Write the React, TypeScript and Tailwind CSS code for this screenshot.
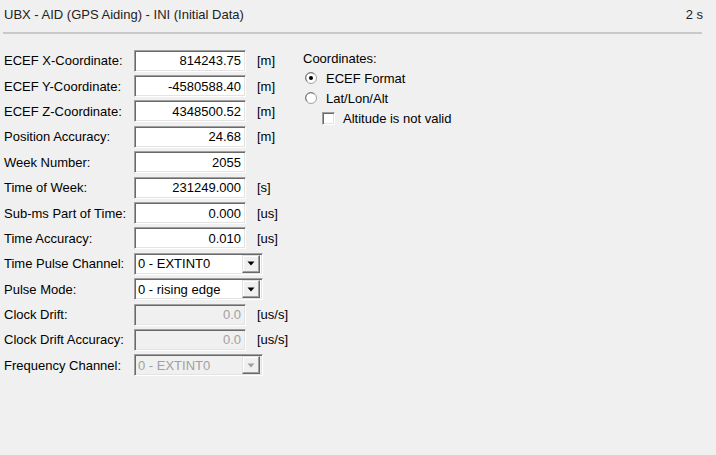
const rows: { label: string; kind: 'edit' | 'combo'; value: string; unit?: string; disabled?: boolean }[] = [
  { label: 'ECEF X-Coordinate:', kind: 'edit', value: '814243.75', unit: '[m]' },
  { label: 'ECEF Y-Coordinate:', kind: 'edit', value: '-4580588.40', unit: '[m]' },
  { label: 'ECEF Z-Coordinate:', kind: 'edit', value: '4348500.52', unit: '[m]' },
  { label: 'Position Accuracy:', kind: 'edit', value: '24.68', unit: '[m]' },
  { label: 'Week Number:', kind: 'edit', value: '2055' },
  { label: 'Time of Week:', kind: 'edit', value: '231249.000', unit: '[s]' },
  { label: 'Sub-ms Part of Time:', kind: 'edit', value: '0.000', unit: '[us]' },
  { label: 'Time Accuracy:', kind: 'edit', value: '0.010', unit: '[us]' },
  { label: 'Time Pulse Channel:', kind: 'combo', value: '0 - EXTINT0' },
  { label: 'Pulse Mode:', kind: 'combo', value: '0 - rising edge' },
  { label: 'Clock Drift:', kind: 'edit', value: '0.0', unit: '[us/s]', disabled: true },
  { label: 'Clock Drift Accuracy:', kind: 'edit', value: '0.0', unit: '[us/s]', disabled: true },
  { label: 'Frequency Channel:', kind: 'combo', value: '0 - EXTINT0', disabled: true },
];

const sunken =
  'border border-t-[#a0a0a0] border-l-[#a0a0a0] border-b-white border-r-white shadow-[inset_1px_1px_0_#696969,inset_-1px_-1px_0_#e3e3e3]';

function Edit({ value, disabled }: { value: string; disabled?: boolean }) {
  return (
    <div
      className={`${sunken} flex h-[22px] w-[112px] items-center justify-end pr-[4px] ${
        disabled ? 'bg-[#f0f0f0] text-[#a0a0a0]' : 'bg-white text-black'
      }`}
    >
      {value}
    </div>
  );
}

function Combo({ value, disabled }: { value: string; disabled?: boolean }) {
  return (
    <div
      className={`${sunken} flex h-[22px] w-[129px] items-center justify-between pl-[3px] pr-[2px] ${
        disabled ? 'bg-[#f0f0f0] text-[#a0a0a0]' : 'bg-white text-black'
      }`}
    >
      <span>{value}</span>
      <div className="flex h-[18px] w-[18px] items-center justify-center border border-t-[#e3e3e3] border-l-[#e3e3e3] border-b-[#696969] border-r-[#696969] bg-[#f0f0f0] shadow-[inset_-1px_-1px_0_#a0a0a0,inset_1px_1px_0_#ffffff]">
        <svg width="8" height="5" viewBox="0 0 8 5">
          <path d="M0.5 0.5h7L4 4.5z" fill={disabled ? '#a0a0a0' : '#000'} />
        </svg>
      </div>
    </div>
  );
}

function Radio({ checked }: { checked?: boolean }) {
  return (
    <svg width="12" height="12" viewBox="0 0 12 12">
      <circle cx="6" cy="6" r="5.5" fill="#fff" stroke="#a0a0a0" />
      <path d="M2.2 9.2A4.6 4.6 0 0 1 9.2 2.2" fill="none" stroke="#696969" strokeWidth="0.9" />
      {checked && <circle cx="6" cy="6" r="2" fill="#000" />}
    </svg>
  );
}

export default function App() {
  return (
    <div
      className="h-[455px] w-[716px] overflow-hidden whitespace-nowrap bg-[#f0f0f0] text-[13px] leading-none text-black"
      style={{ fontFamily: '"Liberation Sans Narrow", "Liberation Sans", Arial, sans-serif' }}
    >
      <div className="flex h-[28px] items-center justify-between pl-[4px] pr-[13px] text-[#222]">
        <span>UBX - AID (GPS Aiding) - INI (Initial Data)</span>
        <span>2 s</span>
      </div>
      <div className="ml-[3px] mr-[14px] mt-[4px] h-[2px] bg-[#c9c9c9]" />

      <div className="mt-[14px] flex">
        <div className="flex w-[303px] flex-col pl-[4px]">
          {rows.map((r) => (
            <div key={r.label} className="flex h-[25.4px] items-center">
              <span className="w-[130px] shrink-0">{r.label}</span>
              {r.kind === 'edit' ? (
                <Edit value={r.value} disabled={r.disabled} />
              ) : (
                <Combo value={r.value} disabled={r.disabled} />
              )}
              {r.unit && <span className="ml-[11px]">{r.unit}</span>}
            </div>
          ))}
        </div>

        <div className="flex flex-col">
          <div className="flex h-[20px] items-center">Coordinates:</div>
          <div className="flex h-[20px] items-center gap-[9px] pl-[2px]">
            <Radio checked />
            <span>ECEF Format</span>
          </div>
          <div className="flex h-[20px] items-center gap-[9px] pl-[2px]">
            <Radio />
            <span>Lat/Lon/Alt</span>
          </div>
          <div className="flex h-[20px] items-center gap-[8px] pl-[19px]">
            <div className={`${sunken} h-[13px] w-[13px] bg-white`} />
            <span>Altitude is not valid</span>
          </div>
        </div>
      </div>
    </div>
  );
}
